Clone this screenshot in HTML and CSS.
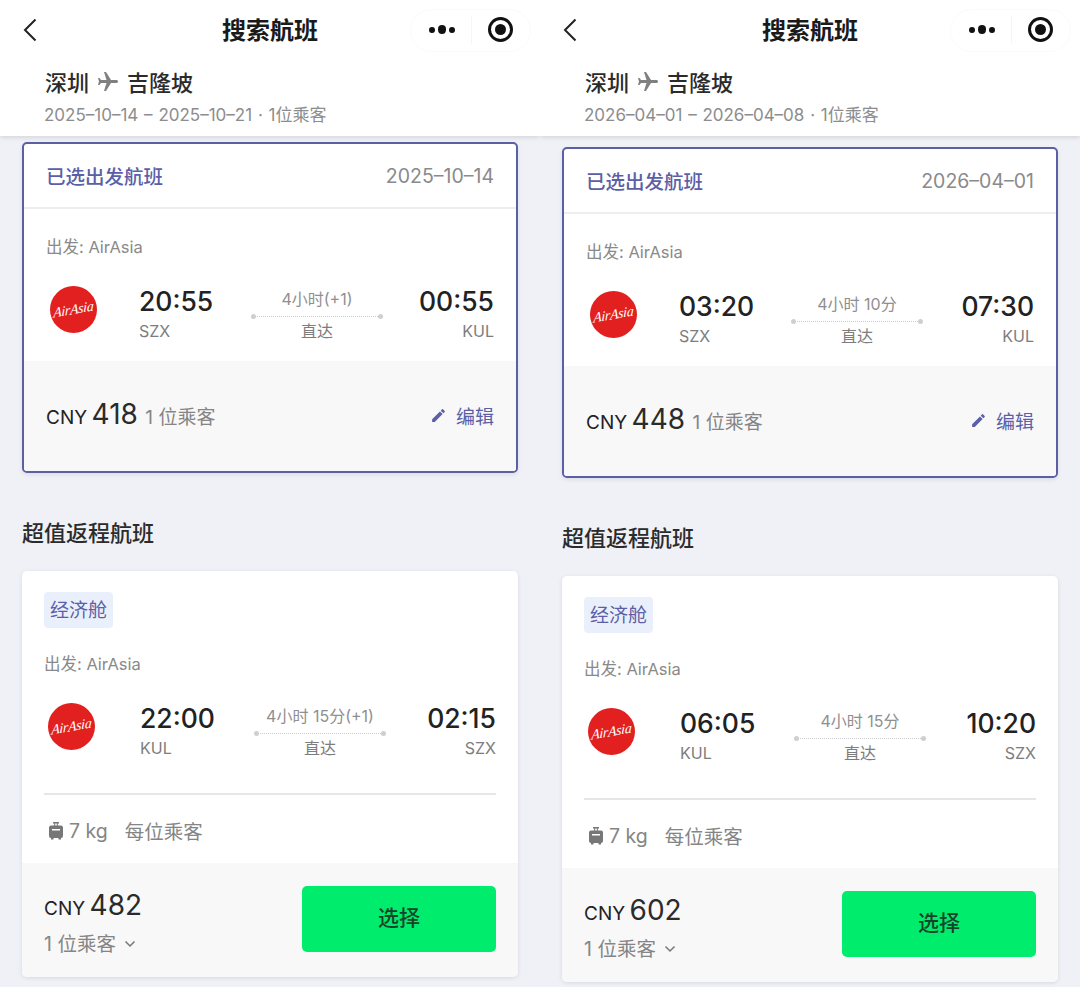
FILE: index.html
```html
<!DOCTYPE html>
<html>

<head>
    <title>搜索航班</title>
    <link rel="stylesheet" href="styles.css">
</head>

<body>
    <svg class="defs" width="0" height="0">
        <symbol id="plane" viewBox="0 0 24 24">
            <path d="M21 16v-2l-8-5V3.5c0-.83-.67-1.5-1.5-1.5S10 2.67 10 3.5V9l-8 5v2l8-2.5V19l-2 1.5V22l3.5-1 3.5 1v-1.5L13 19v-5.5l8 2.5z" transform="rotate(90 12 12)" />
        </symbol>
        <symbol id="pencil" viewBox="0 0 24 24">
            <path d="M3 17.25V21h3.75L17.81 9.94l-3.75-3.75L3 17.25zM20.71 7.04a1 1 0 0 0 0-1.41l-2.34-2.34a1 1 0 0 0-1.41 0l-1.83 1.83 3.75 3.75 1.83-1.83z" />
        </symbol>
        <symbol id="bag" viewBox="0 0 16 20">
            <path d="M5 1h6v1.5H5zM6.2 2.5h1v2h-1zM8.800 2.500h1v2h-1zM3 4.500h10a2 2 0 0 1 2 2V15a2 2 0 0 1-2 2H3a2 2 0 0 1-2-2V6.500a2 2 0 0 1 2-2zM3 17h2.500v1.500H3zM10.500 17H13v1.500h-2.500z" />
            <path d="M4 8h8v1.600H4z" fill="#fff" />
        </symbol>
    </svg>

    <div class="screens">
        <!-- 左边 -->
        <div class="phone">
            <div class="top">
                <div class="nav">
                    <svg class="back" width="14" height="24" viewBox="0 0 14 24">
                        <path d="M12.500 1.500 2 12l10.500 10.500" />
                    </svg>
                    <div class="nav-title">搜索航班</div>
                    <div class="capsule">
                        <span class="dots"><i></i><b></b><i></i></span>
                        <span class="capsule-line"></span>
                        <span class="target"></span>
                    </div>
                </div>
                <div class="route">深圳 <svg class="route-plane"><use href="#plane" /></svg> 吉隆坡</div>
                <div class="route-sub">2025–10–14 – 2025–10–21 · 1位乘客</div>
            </div>

            <div class="content">
                <div class="card selected">
                    <div class="selected-head">
                        <span class="selected-title">已选出发航班</span>
                        <span class="selected-date">2025–10–14</span>
                    </div>
                    <div class="selected-body">
                        <div class="carrier">出发: AirAsia</div>
                        <div class="flight">
                            <div class="logo"><span>AirAsia</span></div>
                            <div class="dep">
                                <div class="time">20:55</div>
                                <div class="code">SZX</div>
                            </div>
                            <div class="mid">
                                <div class="duration">4小时(+1)</div>
                                <div class="track"></div>
                                <div class="direct">直达</div>
                            </div>
                            <div class="arr">
                                <div class="time">00:55</div>
                                <div class="code">KUL</div>
                            </div>
                        </div>
                    </div>
                    <div class="selected-foot">
                        <div class="price">
                            <span class="cny">CNY</span> <span class="amount">418</span>
                            <span class="pax">1 位乘客</span>
                        </div>
                        <div class="edit"><svg class="edit-icon"><use href="#pencil" /></svg>编辑</div>
                    </div>
                </div>

                <h3 class="section-title">超值返程航班</h3>

                <div class="card result">
                    <div class="result-body">
                        <span class="cabin">经济舱</span>
                        <div class="carrier">出发: AirAsia</div>
                        <div class="flight">
                            <div class="logo"><span>AirAsia</span></div>
                            <div class="dep">
                                <div class="time">22:00</div>
                                <div class="code">KUL</div>
                            </div>
                            <div class="mid">
                                <div class="duration">4小时 15分(+1)</div>
                                <div class="track"></div>
                                <div class="direct">直达</div>
                            </div>
                            <div class="arr">
                                <div class="time">02:15</div>
                                <div class="code">SZX</div>
                            </div>
                        </div>
                        <div class="baggage">
                            <svg class="bag-icon"><use href="#bag" /></svg>
                            <span class="kg">7 kg</span>
                            <span>每位乘客</span>
                        </div>
                    </div>
                    <div class="result-foot">
                        <div>
                            <div class="price"><span class="cny">CNY</span> <span class="amount">482</span></div>
                            <div class="pax-row">1 位乘客 <svg class="chevron" viewBox="0 0 12 8"><path d="M1.500 1.500 6 6l4.500-4.500" /></svg></div>
                        </div>
                        <button class="select-btn">选择</button>
                    </div>
                </div>
            </div>
        </div>

        <!-- 右边 -->
        <div class="phone later">
            <div class="top">
                <div class="nav">
                    <svg class="back" width="14" height="24" viewBox="0 0 14 24">
                        <path d="M12.500 1.500 2 12l10.500 10.500" />
                    </svg>
                    <div class="nav-title">搜索航班</div>
                    <div class="capsule">
                        <span class="dots"><i></i><b></b><i></i></span>
                        <span class="capsule-line"></span>
                        <span class="target"></span>
                    </div>
                </div>
                <div class="route">深圳 <svg class="route-plane"><use href="#plane" /></svg> 吉隆坡</div>
                <div class="route-sub">2026–04–01 – 2026–04–08 · 1位乘客</div>
            </div>

            <div class="content">
                <div class="card selected">
                    <div class="selected-head">
                        <span class="selected-title">已选出发航班</span>
                        <span class="selected-date">2026–04–01</span>
                    </div>
                    <div class="selected-body">
                        <div class="carrier">出发: AirAsia</div>
                        <div class="flight">
                            <div class="logo"><span>AirAsia</span></div>
                            <div class="dep">
                                <div class="time">03:20</div>
                                <div class="code">SZX</div>
                            </div>
                            <div class="mid">
                                <div class="duration">4小时 10分</div>
                                <div class="track"></div>
                                <div class="direct">直达</div>
                            </div>
                            <div class="arr">
                                <div class="time">07:30</div>
                                <div class="code">KUL</div>
                            </div>
                        </div>
                    </div>
                    <div class="selected-foot">
                        <div class="price">
                            <span class="cny">CNY</span> <span class="amount">448</span>
                            <span class="pax">1 位乘客</span>
                        </div>
                        <div class="edit"><svg class="edit-icon"><use href="#pencil" /></svg>编辑</div>
                    </div>
                </div>

                <h3 class="section-title">超值返程航班</h3>

                <div class="card result">
                    <div class="result-body">
                        <span class="cabin">经济舱</span>
                        <div class="carrier">出发: AirAsia</div>
                        <div class="flight">
                            <div class="logo"><span>AirAsia</span></div>
                            <div class="dep">
                                <div class="time">06:05</div>
                                <div class="code">KUL</div>
                            </div>
                            <div class="mid">
                                <div class="duration">4小时 15分</div>
                                <div class="track"></div>
                                <div class="direct">直达</div>
                            </div>
                            <div class="arr">
                                <div class="time">10:20</div>
                                <div class="code">SZX</div>
                            </div>
                        </div>
                        <div class="baggage">
                            <svg class="bag-icon"><use href="#bag" /></svg>
                            <span class="kg">7 kg</span>
                            <span>每位乘客</span>
                        </div>
                    </div>
                    <div class="result-foot">
                        <div>
                            <div class="price"><span class="cny">CNY</span> <span class="amount">602</span></div>
                            <div class="pax-row">1 位乘客 <svg class="chevron" viewBox="0 0 12 8"><path d="M1.500 1.500 6 6l4.500-4.500" /></svg></div>
                        </div>
                        <button class="select-btn">选择</button>
                    </div>
                </div>
            </div>
        </div>
    </div>
</body>

</html>
```

FILE: styles.css
```css
* {
    box-sizing: border-box;
}

body {
    margin: 0;
    font-family: Inter, "Noto Sans CJK SC", sans-serif;
    color: #222;
    background: #eff1f6;
}

.defs {
    position: absolute;
}

.screens {
    display: flex;
    width: 1080px;
    height: 987px;
    overflow: hidden;
}

.phone {
    width: 540px;
    height: 987px;
    overflow: hidden;
    background: #eff1f6;
}

/* top bar */
.top {
    height: 136px;
    padding: 9px 0 0 45px;
    background: #fff;
    box-shadow: 0 1px 5px rgba(0, 0, 0, 0.14);
}

.nav {
    position: relative;
    display: flex;
    justify-content: center;
    align-items: center;
    height: 43px;
    margin-left: -45px;
}

.back {
    position: absolute;
    left: 23px;
    top: 9px;
    fill: none;
    stroke: #222;
    stroke-width: 2;
}

.nav-title {
    font-size: 24px;
    font-weight: 700;
    line-height: 34px;
    color: #1a1a1a;
}

.capsule {
    position: absolute;
    right: 9px;
    top: 0;
    display: flex;
    align-items: center;
    width: 121px;
    height: 43px;
    padding: 0 0 2px 18px;
    border: 1px solid #fbfbfb;
    border-radius: 22px;
}

.dots {
    display: flex;
    align-items: center;
    gap: 3px;
    width: 26px;
}

.dots i {
    width: 6px;
    height: 6px;
    border-radius: 50%;
    background: #111;
}

.dots b {
    width: 9px;
    height: 9px;
    border-radius: 50%;
    background: #111;
}

.capsule-line {
    width: 1px;
    height: 28px;
    margin: 0 16px;
    background: #f5f5f5;
}

.target {
    position: relative;
    width: 25px;
    height: 25px;
    border: 3px solid #111;
    border-radius: 50%;
}

.target::after {
    content: "";
    position: absolute;
    left: 4px;
    top: 4px;
    width: 11px;
    height: 11px;
    border-radius: 50%;
    background: #111;
}

.route {
    display: flex;
    align-items: center;
    gap: 7px;
    height: 32px;
    margin-top: 13px;
    font-size: 22px;
    font-weight: 500;
    color: #2b2b2b;
}

.route-plane {
    width: 24px;
    height: 24px;
    margin-top: 2px;
    fill: #808080;
}

.route-sub {
    margin: 6px 0 0 -1px;
    font-size: 17px;
    line-height: 24px;
    word-spacing: 1px;
    color: #8d8d8d;
}

/* content */
.content {
    padding: 6px 22px 0;
}

.later .content {
    padding-top: 11px;
}

.card {
    width: 496px;
    background: #fff;
    border-radius: 5px;
    overflow: hidden;
}

.selected {
    height: 331px;
    border: 2px solid #5b5fa3;
    box-shadow: 0 2px 4px rgba(0, 0, 0, 0.08);
}

.selected-head {
    display: flex;
    justify-content: space-between;
    align-items: center;
    height: 65px;
    padding: 0 22px;
    border-bottom: 2px solid #eeeeee;
}

.selected-title {
    font-size: 19.500px;
    font-weight: 500;
    color: #5b5fa8;
}

.selected-date {
    font-size: 19.500px;
    color: #8a8a8a;
}

.selected-body {
    height: 152px;
    padding: 26px 22px 0;
}

.carrier {
    font-size: 16.500px;
    line-height: 24px;
    color: #8a8a8a;
}

.flight {
    display: flex;
    align-items: flex-start;
    margin-top: 25px;
}

.logo {
    display: flex;
    justify-content: center;
    align-items: center;
    flex: none;
    width: 47px;
    height: 47px;
    margin: 2px 42px 0 4px;
    border-radius: 50%;
    background: #e1201f;
}

.logo span {
    font-family: "Liberation Serif", serif;
    font-size: 14px;
    font-style: italic;
    letter-spacing: -0.3px;
    color: #fff;
    transform: rotate(-10deg) skewX(-12deg);
}

.dep {
    flex: none;
    width: 112px;
}

.arr {
    flex: 1;
    text-align: right;
}

.time {
    margin: -1px 0 1px;
    font-size: 26.500px;
    font-weight: 500;
    line-height: 36px;
    color: #222;
}

.code {
    font-size: 16px;
    line-height: 23px;
    color: #7d7d7d;
}

.mid {
    flex: none;
    width: 132px;
    padding-top: 3px;
    font-size: 16px;
    text-align: center;
    color: #8f8f8f;
}

.duration {
    line-height: 24px;
}

.direct {
    line-height: 24px;
    color: #7d7d7d;
}

.track {
    position: relative;
    height: 1px;
    margin: 5px 3px 2px;
    border-top: 1px dotted #cccccc;
}

.track::before,
.track::after {
    content: "";
    position: absolute;
    top: -3px;
    width: 5px;
    height: 5px;
    border-radius: 50%;
    background: #cfcfcf;
}

.track::before {
    left: -3px;
}

.track::after {
    right: -3px;
}

.selected-foot {
    display: flex;
    justify-content: space-between;
    align-items: center;
    height: 110px;
    padding: 0 22px 3px;
    background: #f8f8f9;
}

.selected-foot .price {
    margin-top: -2px;
}

.selected-foot .edit {
    margin-top: 2px;
}

.cny {
    font-size: 19px;
    color: #222;
}

.amount {
    font-size: 28px;
    color: #2b2b2b;
}

.pax {
    margin-left: 3px;
    font-size: 19px;
    color: #858585;
}

.edit {
    display: flex;
    align-items: center;
    font-size: 19px;
    color: #5b5fa8;
}

.edit-icon {
    width: 17px;
    height: 17px;
    margin-right: 9px;
    fill: #5b5fa8;
}

.section-title {
    margin: 45px 0 23px;
    font-size: 22px;
    font-weight: 500;
    line-height: 30px;
    color: #2b2b2b;
}

.result {
    height: 406px;
    box-shadow: 0 1px 4px rgba(0, 0, 0, 0.1);
}

.result-body {
    height: 292px;
    padding: 21px 22px 0;
}

.cabin {
    display: inline-block;
    height: 36px;
    padding: 0 6px;
    font-size: 19px;
    line-height: 37px;
    color: #5b5fa8;
    background: #eaf0fb;
    border-radius: 4px;
}

.result .carrier {
    margin-top: 24px;
}

.result .flight {
    padding-bottom: 33px;
    border-bottom: 2px solid #e6e6e6;
}

.result .logo {
    margin-right: 45px;
}

.result .dep {
    width: 114px;
}

.baggage {
    display: flex;
    align-items: center;
    margin-top: 21px;
    font-size: 19.500px;
    color: #858585;
}

.bag-icon {
    width: 16px;
    height: 20px;
    margin-left: 4px;
    fill: #777;
}

.kg {
    margin: 0 17px 0 5px;
}

.result-foot {
    display: flex;
    justify-content: space-between;
    align-items: center;
    height: 114px;
    padding: 7px 22px 0;
    background: #f8f8f9;
}

.pax-row {
    display: flex;
    align-items: center;
    gap: 8px;
    margin-top: 7px;
    font-size: 19.500px;
    line-height: 30px;
    color: #858585;
}

.chevron {
    width: 12px;
    height: 8px;
    fill: none;
    stroke: #777;
    stroke-width: 1.5;
}

.select-btn {
    width: 194px;
    height: 66px;
    margin-bottom: 10px;
    padding-bottom: 6px;
    font-family: inherit;
    font-size: 21px;
    font-weight: 500;
    color: #16432a;
    background: #00ec6c;
    border: none;
    border-radius: 5px;
}
```
